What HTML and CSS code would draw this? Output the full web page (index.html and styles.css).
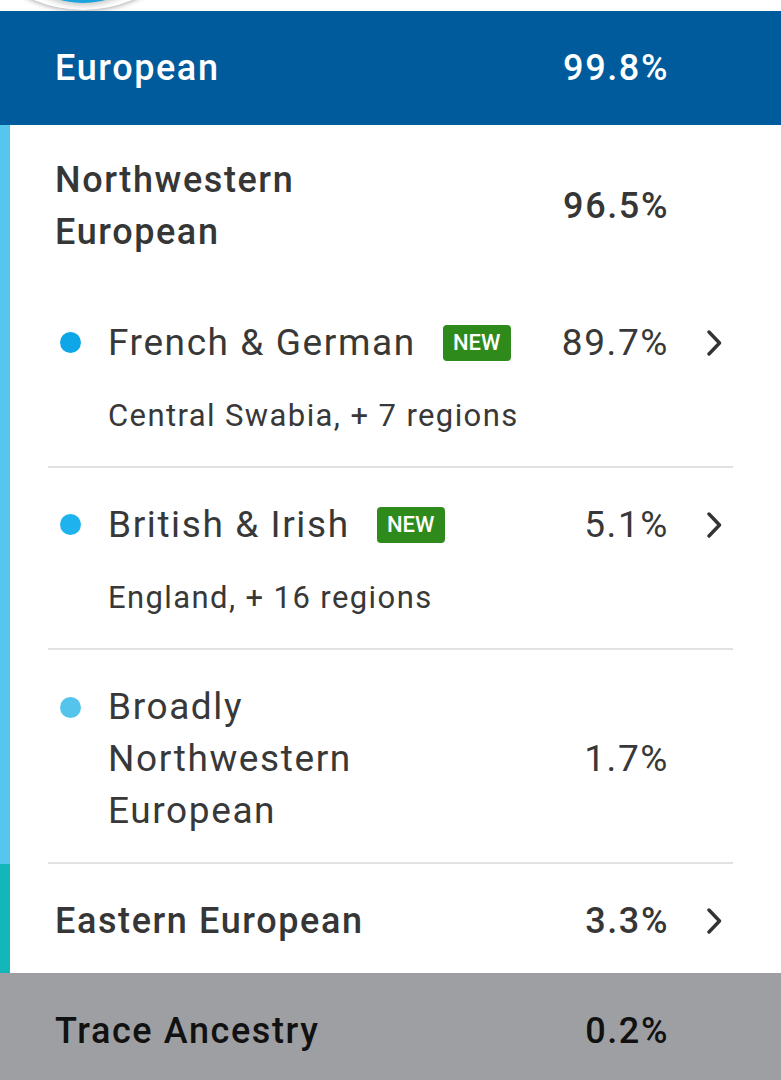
FILE: index.html
```html
<!DOCTYPE html>
<html>
<head>
<meta charset="utf-8">
<link rel="stylesheet" href="styles.css">
</head>
<body>
<div class="topstrip">
  <div class="badge-circle"><div class="badge-inner"></div></div>
</div>
<div class="region-head">
  <span class="name">European</span>
  <span class="pct">99.8%</span>
  <span class="chev-slot"></span>
</div>

<div class="group group-nw">
  <div class="content">
    <div class="row top nw-head">
      <span class="name">Northwestern<br>European</span>
      <span class="pct">96.5%</span>
      <span class="chev-slot"></span>
    </div>

    <div class="sub first">
      <div class="line">
        <span class="dot dot-fg"></span>
        <span class="name">French &amp; German</span>
        <span class="new">NEW</span>
        <span class="pct">89.7%</span>
        <span class="chev-slot"><svg class="chev" viewBox="0 0 16 26"><path d="M3 2 L13.5 13 L3 24"/></svg></span>
      </div>
      <div class="detail">Central Swabia, + 7 regions</div>
    </div>

    <div class="sub">
      <div class="line">
        <span class="dot dot-bi"></span>
        <span class="name">British &amp; Irish</span>
        <span class="new">NEW</span>
        <span class="pct">5.1%</span>
        <span class="chev-slot"><svg class="chev" viewBox="0 0 16 26"><path d="M3 2 L13.5 13 L3 24"/></svg></span>
      </div>
      <div class="detail">England, + 16 regions</div>
    </div>

    <div class="sub broad">
      <div class="line">
        <span class="dot dot-bn"></span>
        <span class="name">Broadly<br>Northwestern<br>European</span>
        <span class="pct">1.7%</span>
        <span class="chev-slot"></span>
      </div>
    </div>
  </div>
</div>

<div class="group group-ee">
  <div class="content">
    <div class="row top ee">
      <span class="name">Eastern European</span>
      <span class="pct">3.3%</span>
      <span class="chev-slot"><svg class="chev" viewBox="0 0 16 26"><path d="M3 2 L13.5 13 L3 24"/></svg></span>
    </div>
  </div>
</div>

<div class="trace">
  <span class="name">Trace Ancestry</span>
  <span class="pct">0.2%</span>
  <span class="chev-slot"></span>
</div>
</body>
</html>
```

FILE: styles.css
```css
html, body {
  margin: 0;
  padding: 0;
  background: #ffffff;
}
body {
  width: 781px;
  font-family: Roboto, "Liberation Sans", sans-serif;
  color: #363636;
  overflow: hidden;
}

.topstrip {
  height: 11px;
  overflow: hidden;
  display: flex;
}
.badge-circle {
  width: 250px;
  height: 250px;
  margin-left: -42px;
  margin-top: -240px;
  flex: none;
  border-radius: 50%;
  background: #ffffff;
  box-shadow: 0 1px 5px rgba(0, 0, 0, 0.35);
  display: flex;
  align-items: flex-end;
  justify-content: center;
}
.badge-inner {
  width: 170px;
  height: 170px;
  margin-bottom: 7px;
  border-radius: 50%;
  background: #1aa3dd;
  box-shadow: 0 0 5px 3px rgba(0, 0, 0, 0.2);
}

.region-head {
  background: #005b9c;
  color: #ffffff;
  display: flex;
  align-items: center;
  padding: 31px 48px 31px 55px;
  font-size: 36px;
  font-weight: 500;
  letter-spacing: 1.6px;
  line-height: 52px;
}
.region-head .name { flex: 1; }

.pct {
  text-align: right;
  white-space: nowrap;
  margin-right: -2px;
}
.chev-slot {
  width: 66px;
  flex: none;
  display: flex;
  align-items: center;
  justify-content: flex-start;
  padding-left: 39px;
  box-sizing: border-box;
}
.chev {
  width: 16px;
  height: 26px;
  fill: none;
  stroke: #333333;
  stroke-width: 3.4;
  stroke-linecap: round;
  stroke-linejoin: round;
}

.group {
  display: flex;
  border-left: 10px solid #56c6ee;
}
.group-ee {
  border-left-color: #13b6b9;
}
.content {
  flex: 1;
  margin: 0 48px 0 38px;
}

.row {
  display: flex;
  align-items: center;
}
.row.top {
  padding-left: 7px;
  font-size: 36px;
  font-weight: 500;
  letter-spacing: 1.6px;
  line-height: 52px;
}
.row.top .name { flex: 1; }
.nw-head {
  padding-top: 29px;
  padding-bottom: 28px;
}
.ee {
  padding-top: 31px;
  padding-bottom: 26px;
}

.sub {
  padding: 31px 0 24px;
  border-bottom: 2px solid #e2e2e2;
}
.sub.broad {
  padding-bottom: 25px;
}
.line {
  display: flex;
  align-items: flex-start;
  font-size: 37px;
  line-height: 52px;
  letter-spacing: 1.6px;
  color: #383838;
}
.line .pct {
  margin-left: auto;
}
.broad .line {
  align-items: center;
}
.broad .line .dot {
  align-self: flex-start;
}
.line .chev-slot {
  height: 52px;
}
.dot {
  width: 21px;
  height: 21px;
  border-radius: 50%;
  margin: 15px 27px 0 12px;
  flex: none;
}
.dot-fg { background: #0ea6e6; }
.dot-bi { background: #1eb2ee; }
.dot-bn { background: #55c4ec; }
.broad .line .dot { margin-top: 16px; }

.new {
  margin-left: 27px;
  margin-top: 8px;
  width: 68px;
  height: 36px;
  border-radius: 4px;
  background: #2f8a1c;
  color: #ffffff;
  font-size: 22px;
  font-weight: 500;
  letter-spacing: 0;
  line-height: 36px;
  text-align: center;
}
.detail {
  margin-top: 21px;
  padding-left: 60px;
  font-size: 31px;
  line-height: 52px;
  letter-spacing: 1.4px;
  color: #383838;
}

.trace {
  background: #9e9fa3;
  color: #111111;
  display: flex;
  align-items: center;
  padding: 32px 48px 40px 55px;
  font-size: 36px;
  font-weight: 500;
  letter-spacing: 1.6px;
  line-height: 52px;
}
.trace .name { flex: 1; }
```
